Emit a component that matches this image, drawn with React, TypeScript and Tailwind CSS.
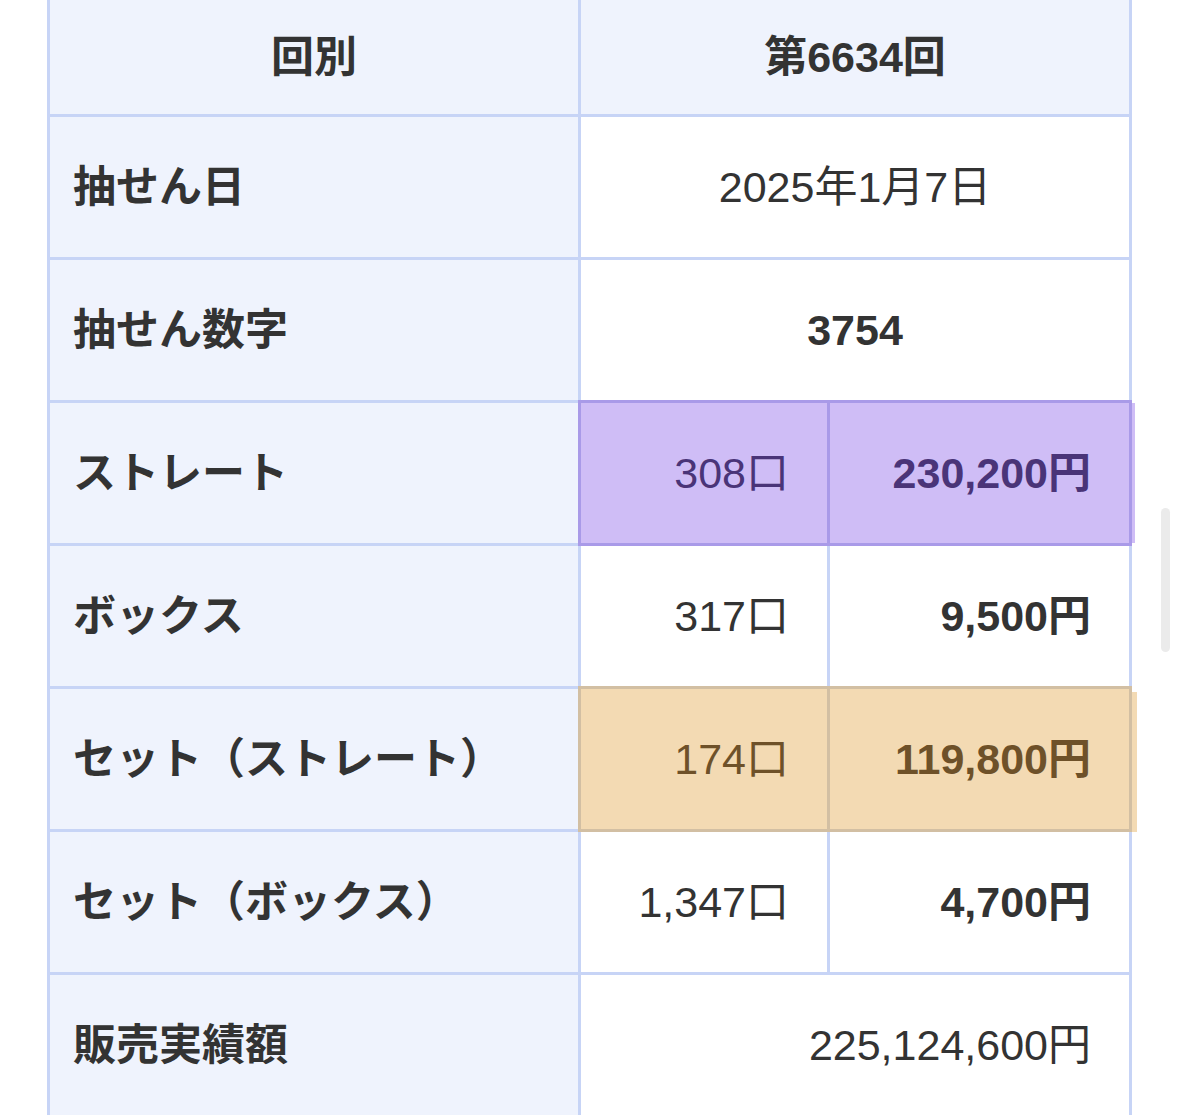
import React from "react";

const font = { fontFamily: '"Liberation Sans", "Noto Sans CJK JP", sans-serif' };

function Label({ children }: { children: React.ReactNode }) {
  return (
    <div className="bg-[#eff3fd] flex items-center pl-[23px] h-[140px] text-[43px] font-bold text-[#333333]">
      {children}
    </div>
  );
}

export default function App() {
  return (
    <div className="relative w-[1179px] h-[1115px] bg-white overflow-hidden" style={font}>
      <div className="ml-[47px] w-[1085px] bg-[#c7d4f6] px-[3px] grid grid-cols-[528px_246px_299px] gap-[3px] text-[#333333]">
        {/* header */}
        <div className="bg-[#eff3fd] h-[114px] flex items-center justify-center text-[43px] font-bold">回別</div>
        <div className="col-span-2 bg-[#eff3fd] h-[114px] flex items-center justify-center text-[43px] font-bold">第6634回</div>

        <Label>抽せん日</Label>
        <div className="col-span-2 bg-white flex items-center justify-center text-[43px]">2025年1月7日</div>

        <Label>抽せん数字</Label>
        <div className="col-span-2 bg-white flex items-center justify-center text-[43px] font-bold">3754</div>

        <Label>ストレート</Label>
        <div className="relative z-10 bg-[#cfbdf6] outline-[3px] outline-solid outline-[#a99ae8] flex items-center justify-end pr-[38px] text-[43px] text-[#4a3478]">308口</div>
        <div className="relative z-10 bg-[#cfbdf6] outline-[3px] outline-solid outline-[#a99ae8] shadow-[6px_0_0_0_#cfbdf6] flex items-center justify-end pr-[38px] text-[43px] font-bold text-[#4a3478]">230,200円</div>

        <Label>ボックス</Label>
        <div className="bg-white flex items-center justify-end pr-[38px] text-[43px]">317口</div>
        <div className="bg-white flex items-center justify-end pr-[38px] text-[43px] font-bold">9,500円</div>

        <Label>セット（ストレート）</Label>
        <div className="relative z-10 bg-[#f3dab3] outline-[3px] outline-solid outline-[#d2bfa3] flex items-center justify-end pr-[38px] text-[43px] text-[#6e5129]">174口</div>
        <div className="relative z-10 bg-[#f3dab3] outline-[3px] outline-solid outline-[#d2bfa3] shadow-[8px_3px_0_0_#f3dab3] flex items-center justify-end pr-[38px] text-[43px] font-bold text-[#6e5129]">119,800円</div>

        <Label>セット（ボックス）</Label>
        <div className="bg-white flex items-center justify-end pr-[38px] text-[43px]">1,347口</div>
        <div className="bg-white flex items-center justify-end pr-[38px] text-[43px] font-bold">4,700円</div>

        <Label>販売実績額</Label>
        <div className="col-span-2 bg-white flex items-center justify-end pr-[38px] text-[43px]">225,124,600円</div>
      </div>
      <div className="absolute left-[1161px] top-[508px] w-[9px] h-[144px] rounded-full bg-[#ebebeb]" />
    </div>
  );
}
